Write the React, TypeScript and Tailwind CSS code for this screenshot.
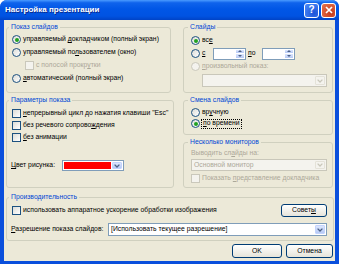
import React from "react";

type Opt = { checked?: boolean; disabled?: boolean };

const Radio = ({ checked = false, disabled = false }: Opt) => (
  <span
    className={`flex items-center justify-center w-[9px] h-[9px] rounded-full border shrink-0 ${
      disabled ? "border-[#CAC8BB] bg-[#F4F3EE]" : "border-[#1C5180] bg-linear-to-br from-[#DCDCD7] to-white"
    }`}
  >
    {checked && <span className="w-[4px] h-[4px] rounded-full bg-[#21A121]" />}
  </span>
);

const Check = ({ disabled = false }: Opt) => (
  <span
    className={`block w-[9px] h-[9px] border shrink-0 ${
      disabled ? "border-[#CAC8BB] bg-[#F4F3EE]" : "border-[#1C5180] bg-linear-to-br from-[#DCDCD7] to-white"
    }`}
  />
);

const Arrow = ({ disabled = false }: Opt) => (
  <span
    className={`flex items-center justify-center w-[10px] h-full rounded-[1px] shrink-0 ${
      disabled ? "bg-[#F4F3EE] border border-[#E4E2D8]" : "bg-linear-to-b from-[#DCE6FD] to-[#B6C9F5] border border-[#C3D3FD]"
    }`}
  >
    <svg width="6" height="4" viewBox="0 0 6 4">
      <path d="M0.6 0.6 L3 3 L5.4 0.6" stroke={disabled ? "#C9C7BA" : "#4D6185"} strokeWidth="1.3" fill="none" />
    </svg>
  </span>
);

const Combo = ({ className, disabled = false, children }: any) => (
  <div
    className={`flex items-stretch border p-[1px] ${
      disabled ? "border-[#C9C7BA] bg-[#F4F3EE] text-[#ACA899]" : "border-[#7F9DB9] bg-white"
    } ${className}`}
  >
    <div className="flex-1 flex items-center pl-[1px] overflow-hidden">{children}</div>
    <Arrow disabled={disabled} />
  </div>
);

const Spin = ({ className }: any) => (
  <div className={`flex items-stretch h-[12px] border border-[#7F9DB9] bg-white p-[1px] ${className}`}>
    <div className="flex-1" />
    <div className="flex flex-col w-[8px] gap-[1px]">
      <span className="flex-1 flex items-center justify-center bg-linear-to-b from-[#DCE6FD] to-[#B6C9F5]">
        <svg width="4" height="2" viewBox="0 0 4 2"><path d="M0 2 L2 0 L4 2Z" fill="#4D6185" /></svg>
      </span>
      <span className="flex-1 flex items-center justify-center bg-linear-to-b from-[#DCE6FD] to-[#B6C9F5]">
        <svg width="4" height="2" viewBox="0 0 4 2"><path d="M0 0 L2 2 L4 0Z" fill="#4D6185" /></svg>
      </span>
    </div>
  </div>
);

const Group = ({ title, className, children }: any) => (
  <fieldset className={`border border-[#D0D0BF] rounded-[3px] px-[5px] ${className}`}>
    <legend className="ml-[-3px] px-[2px] leading-[10px] text-[#0046D5]">{title}</legend>
    {children}
  </fieldset>
);

const Button = ({ className, children }: any) => (
  <div
    className={`flex items-center justify-center border border-[#003C74] rounded-[3px] bg-linear-to-b from-white to-[#E6E4DA] ${className}`}
  >
    {children}
  </div>
);

export default function App() {
  return (
    <div className="w-[339px] h-[264px] bg-white font-['Liberation_Sans',Arial,sans-serif] text-[6.8px] text-black whitespace-nowrap">
      <div className="w-full h-full flex flex-col rounded-t-[7px] overflow-hidden bg-[#0A4FDC]">
        {/* title bar */}
        <div className="h-[20px] flex items-center pl-[5px] pr-[3px] bg-[linear-gradient(to_bottom,#4A9BFF_0%,#0F63EC_14%,#0056E6_45%,#0053E2_80%,#0043C6_100%)]">
          <span className="flex-1 text-white font-bold text-[8px] [text-shadow:1px_1px_0_#0A2A8C]">
            Настройка презентации
          </span>
          <div className="flex items-center gap-[2px]">
            <div className="w-[15px] h-[15px] flex items-center justify-center rounded-[3px] border border-white bg-[radial-gradient(circle_at_70%_70%,#1C54D8,#4C8BFA)] text-white font-bold text-[10px] leading-none">
              ?
            </div>
            <div className="w-[15px] h-[15px] flex items-center justify-center rounded-[3px] border border-white bg-[radial-gradient(circle_at_70%_70%,#C4391C,#E8764F)]">
              <svg width="8" height="8" viewBox="0 0 8 8">
                <path d="M1 1 L7 7 M7 1 L1 7" stroke="white" strokeWidth="1.7" />
              </svg>
            </div>
          </div>
        </div>

        {/* body */}
        <div className="mx-[4px] mb-[3px] flex-1 flex flex-col bg-[#ECE9D8] pt-[2px] px-[2px]">
          <div className="flex gap-[12px]">
            {/* left column */}
            <div className="w-[165px] flex flex-col">
              <Group title="Показ слайдов" className="h-[71px]">
                <div className="pt-[1px]">
                  <div className="h-[13px] flex items-center gap-[2px]">
                    <Radio checked />
                    <span>управляемый <u>д</u>окладчиком (полный экран)</span>
                  </div>
                  <div className="h-[13px] flex items-center gap-[2px]">
                    <Radio />
                    <span>управляемый по<u>л</u>ьзователем (окно)</span>
                  </div>
                  <div className="h-[13px] flex items-center gap-[2px] pl-[13px] text-[#ACA899]">
                    <Check disabled />
                    <span>с полосой прокр<u>у</u>тки</span>
                  </div>
                  <div className="h-[13px] flex items-center gap-[2px]">
                    <Radio />
                    <span><u>а</u>втоматический (полный экран)</span>
                  </div>
                </div>
              </Group>

              <Group title="Параметры показа" className="h-[93px] mt-[2px]">
                <div className="pt-[2px]">
                  <div className="h-[12px] flex items-center gap-[2px]">
                    <Check />
                    <span><u>н</u>епрерывный цикл до нажатия клавиши "Esc"</span>
                  </div>
                  <div className="h-[12px] flex items-center gap-[2px]">
                    <Check />
                    <span>без речевого сопрово<u>ж</u>дения</span>
                  </div>
                  <div className="h-[12px] flex items-center gap-[2px]">
                    <Check />
                    <span><u>б</u>ез анимации</span>
                  </div>
                  <div className="mt-[17px] h-[11px] flex items-center">
                    <span className="w-[51px] -ml-[1px]"><u>Ц</u>вет рисунка:</span>
                    <div className="flex items-stretch h-[11px] w-[62px] border border-[#7F9DB9] bg-white p-[1px] gap-[1px]">
                      <div className="flex-1 bg-[#FF0000]" />
                      <Arrow />
                    </div>
                  </div>
                </div>
              </Group>
            </div>

            {/* right column */}
            <div className="w-[150px] flex flex-col">
              <Group title="Слайды" className="h-[71px] pl-[7px]">
                <div className="pt-[2px]">
                  <div className="h-[13px] flex items-center gap-[2px]">
                    <Radio checked />
                    <span>вс<u>е</u></span>
                  </div>
                  <div className="h-[13px] flex items-center">
                    <Radio />
                    <span className="ml-[2px] w-[11px]"><u>с</u></span>
                    <Spin className="w-[33px]" />
                    <span className="w-[16px] pl-[2px]"><u>п</u>о</span>
                    <Spin className="w-[33px]" />
                  </div>
                  <div className="h-[13px] flex items-center gap-[2px] text-[#ACA899]">
                    <Radio disabled />
                    <span><u>п</u>роизвольный показ:</span>
                  </div>
                  <Combo disabled className="ml-[11px] w-[125px] h-[13px] mt-[1px]" />
                </div>
              </Group>

              <Group title="Смена слайдов" className="h-[40px] mt-[2px] pl-[7px]">
                <div className="pt-[2px]">
                  <div className="h-[11px] flex items-center gap-[2px]">
                    <Radio />
                    <span>вр<u>у</u>чную</span>
                  </div>
                  <div className="h-[11px] flex items-center gap-[1px]">
                    <Radio checked />
                    <span className="flex items-center h-[10px] border border-dotted border-black px-[1px]">
                      <span><u>п</u>о времени</span>
                    </span>
                  </div>
                </div>
              </Group>

              <Group title="Несколько мониторов" className="h-[51px] mt-[2px] pl-[7px]">
                <div className="pt-[1px] text-[#ACA899]">
                  <div className="h-[11px] flex items-center">
                    <span>Выводить сл<u>а</u>йды на:</span>
                  </div>
                  <Combo disabled className="w-[136px] h-[12px]">
                    Основной монитор
                  </Combo>
                  <div className="h-[11px] mt-[2px] flex items-center gap-[2px]">
                    <Check disabled />
                    <span>Показать <u>п</u>редставление докладчика</span>
                  </div>
                </div>
              </Group>
            </div>
          </div>

          <Group title="Производительность" className="h-[49px] mt-[4px] pr-[6px]">
            <div className="mt-[1px] h-[14px] flex items-center gap-[2px]">
              <Check />
              <span className="flex-1">использовать аппаратное ускорение обработки изображения</span>
              <Button className="w-[46px] h-[13px]">
                <span>Совет<u>ы</u></span>
              </Button>
            </div>
            <div className="mt-[6px] h-[13px] flex items-center">
              <span className="w-[97px] -ml-[1px]"><u>Р</u>азрешение показа слайдов:</span>
              <Combo className="w-[219px] h-[13px]">[Использовать текущее разрешение]</Combo>
            </div>
          </Group>

          <div className="mt-[3px] flex justify-end gap-[4px]">
            <Button className="w-[50px] h-[14px]">OK</Button>
            <Button className="w-[47px] h-[14px]">Отмена</Button>
          </div>
        </div>
      </div>
    </div>
  );
}
